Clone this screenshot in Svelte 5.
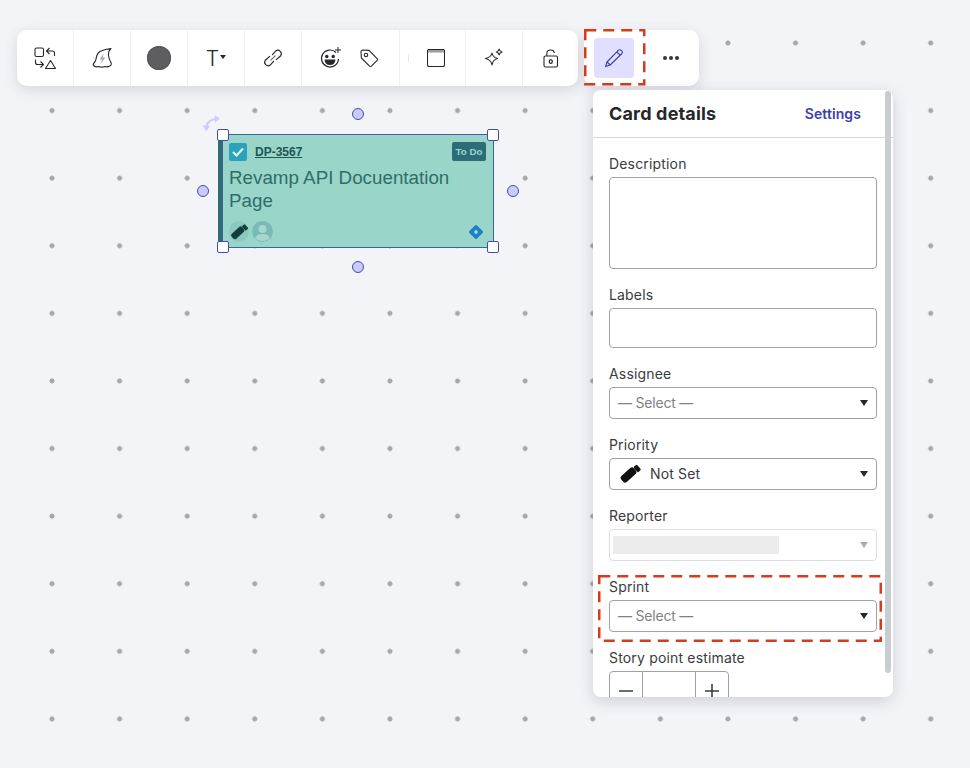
<script>
    const selects = { assignee: 'Assignee', sprint: 'Sprint' };
</script>

<div class="canvas">
    <div class="toolbar">
        <div class="group">
            <div class="cell">
                <svg width="24" height="24" viewBox="0 0 24 24" fill="none" stroke="#26272b" stroke-width="1.1">
                    <rect x="2" y="2" width="8.5" height="8.5" rx="1.5" />
                    <path d="M17.5 14.5 L22.5 22.5 H12.5 Z" stroke-linejoin="round" />
                    <path d="M16.5 2 L13.5 5 L16.5 8 M13.5 5 H19.5 Q21.5 5 21.5 7 V10" />
                    <path d="M7.5 15.5 L10.5 18.5 L7.5 21.5 M10.5 18.5 H4.5 Q2.5 18.5 2.5 16.5 V13.5" />
                </svg>
            </div>
            <div class="cell">
                <svg width="22" height="22" viewBox="0 0 22 22" fill="none" stroke="#26272b" stroke-width="1.1" stroke-linejoin="round">
                    <path d="M3 16 Q5 14 5.5 10 Q6.2 6 9 4.5 Q14 2 20 1.5 Q17 4.5 17.5 8.5 Q18 12.5 20 15.5 Q21 18.5 18.5 19 Q16.5 20.5 14 19.5 Q11 20.8 8 19.5 Q5 20.5 3 19 Q1.5 17.5 3 16 Z" />
                    <path d="M12.5 6.5 L8.5 12.5 H11 L9.5 17 L14.5 10.5 H11.8 Z" fill="#a9adb2" stroke="none" />
                </svg>
            </div>
            <div class="cell">
                <span class="swatch"></span>
            </div>
            <div class="cell text-cell">
                <span class="big-t">T</span>
                <span class="caret"></span>
            </div>
            <div class="cell">
                <svg width="22" height="22" viewBox="0 0 20 20" fill="none" stroke="#26272b" stroke-width="1.05" stroke-linecap="round">
                    <path d="M9.5 7 L12.5 3.6 A3.2 3.2 0 0 1 17 8 L13 11.5" />
                    <path d="M10.5 13 L7.5 16.4 A3.2 3.2 0 0 1 3 12 L7 8.5" />
                    <path d="M8 12 L12 8" stroke="#6d6e72" />
                </svg>
            </div>
            <div class="cell reactions">
                <svg width="24" height="24" viewBox="0 0 24 24" fill="none" stroke="#26272b">
                    <path d="M17 6.5 A8.5 8.5 0 1 0 19.5 13" stroke-width="1.2" />
                    <circle cx="7.8" cy="10.5" r="1.7" fill="#26272b" stroke="none" />
                    <circle cx="14.2" cy="10.5" r="1.7" fill="#26272b" stroke="none" />
                    <path d="M5.5 13.5 H16.5 Q16 19 11 19 Q6 19 5.5 13.5 Z" fill="#26272b" stroke="none" />
                    <path d="M19 1 V7 M16 4 H22" stroke-width="1" />
                </svg>
                <svg width="20" height="20" viewBox="0 0 20 20" fill="none" stroke="#26272b" stroke-width="1.1" stroke-linejoin="round">
                    <path d="M2 4 Q2 2 4 2 L10 2.4 L18.4 10.8 Q19 11.5 18.4 12.2 L12.2 18.4 Q11.5 19 10.8 18.4 L2.4 10 Z" />
                    <circle cx="7" cy="7" r="1.7" />
                </svg>
            </div>
            <div class="cell tick-cell">
                <svg width="18" height="18" viewBox="0 0 18 18" fill="none" stroke="#26272b" stroke-width="1.1">
                    <rect x="0.5" y="0.5" width="17" height="17" rx="1.5" />
                    <path d="M1 1.5 Q1 1 2 1 H16 Q17 1 17 1.5 V3.5 H1 Z" fill="#9b9da1" stroke="none" />
                </svg>
            </div>
            <div class="cell">
                <svg width="20" height="20" viewBox="0 0 20 20" fill="none" stroke="#26272b" stroke-width="1.1" stroke-linejoin="round">
                    <path d="M8 5 Q8.8 9.2 13.5 10.5 Q8.8 11.8 8 17 Q7.2 11.8 1.5 10.5 Q7.2 9.2 8 5 Z" />
                    <path d="M15.2 1 Q15.6 3.2 18 4 Q15.6 4.8 15.2 7 Q14.8 4.8 12.5 4 Q14.8 3.2 15.2 1 Z" />
                </svg>
            </div>
            <div class="cell last">
                <svg width="16" height="19" viewBox="0 0 16 19" fill="none" stroke="#26272b" stroke-width="1.1">
                    <rect x="1" y="7" width="13.5" height="11" rx="1.5" />
                    <path d="M3.8 7 V4.5 Q3.8 1 7.6 1 Q10.8 1 11.4 3.8" />
                    <ellipse cx="7.8" cy="12.5" rx="1.5" ry="1.9" stroke-width="1.3" />
                </svg>
            </div>
        </div>
        <div class="group tail">
            <div class="active">
                <svg width="20" height="20" viewBox="0 0 20 20" fill="none" stroke="#3c3fa8" stroke-width="1.1" stroke-linejoin="round">
                    <path d="M3 14 L14.5 2.2 Q15.6 1.2 16.9 2.2 L18 3.2 Q18.9 4.4 17.9 5.5 L6.2 17 L1.6 18.6 Z" />
                    <path d="M12.8 4 L16.2 7.2 M3 14 L6.2 17" />
                </svg>
            </div>
            <div class="more">
                <i></i><i></i><i></i>
            </div>
            <svg class="callout-bar" width="62" height="57" viewBox="0 0 62 57" fill="none">
                <rect x="1.25" y="1.25" width="59" height="54" stroke="#d93a1c" stroke-width="2.5" stroke-dasharray="11 7" />
            </svg>
        </div>
    </div>

    <!-- selected card on the board -->
    <div class="card">
        <div class="strip"></div>
        <div class="card-head">
            <span class="check">
                <svg width="12" height="10" viewBox="0 0 12 10" fill="none" stroke="#d8f2ee" stroke-width="2.2">
                    <path d="M1 5 L4.5 8.5 L11 1.5" />
                </svg>
            </span>
            <span class="key">DP-3567</span>
            <span class="status">To Do</span>
        </div>
        <div class="card-title">Revamp API Docuentation Page</div>
        <div class="card-foot">
            <span class="prio">
                <svg width="22" height="22" viewBox="0 0 24 24">
                    <rect x="2" y="9" width="17" height="8" rx="2.5" transform="rotate(-42 10.5 13)" fill="#0f3f3c" />
                    <rect x="17" y="3" width="4.5" height="7" rx="1.2" transform="rotate(-42 19.2 6.5)" fill="#0f3f3c" />
                </svg>
            </span>
            <span class="avatar">
                <svg width="21" height="21" viewBox="0 0 21 21">
                    <circle cx="10.5" cy="10.5" r="10.5" fill="#79bab6" />
                    <circle cx="10.5" cy="8" r="4" fill="#a5d6cf" />
                    <path d="M3 17 Q4.5 13 10.5 13 Q16.5 13 18 17 Q15 20 10.5 20 Q6 20 3 17 Z" fill="#a5d6cf" />
                </svg>
            </span>
            <svg class="jira" width="16" height="16" viewBox="0 0 16 16">
                <rect x="2.6" y="2.6" width="10.8" height="10.8" rx="1.5" transform="rotate(45 8 8)" fill="#1f7fc4" />
                <path d="M8 5.8 L10.2 8 L8 10.2 L5.8 8 Z" fill="#a8d8e8" />
            </svg>
        </div>

        <span class="sq tl"></span>
        <span class="sq tr"></span>
        <span class="sq bl"></span>
        <span class="sq br"></span>
        <span class="dot top"></span>
        <span class="dot bottom"></span>
        <span class="dot left"></span>
        <span class="dot right"></span>
        <svg class="rotate" width="20" height="20" viewBox="0 0 20 20" fill="none">
            <path d="M4.5 13 Q5 6.5 13 5" stroke="#cfcdf7" stroke-width="2.2" />
            <path d="M12.5 1 L18 4.6 L13 8.8 Z M0.8 11.5 L8 12 L4 17.5 Z" fill="#cfcdf7" />
        </svg>
    </div>

    <aside class="panel">
        <header>
            <h2>Card details</h2>
            <span class="settings">Settings</span>
        </header>
        <div class="body">
            <div class="field">
                <label for="desc">Description</label>
                <div id="desc" class="box area"></div>
            </div>
            <div class="field">
                <label for="labels">Labels</label>
                <div id="labels" class="box input"></div>
            </div>
            <div class="field">
                <label for="assignee">{selects.assignee}</label>
                <div id="assignee" class="box select">
                    <span class="placeholder">— Select —</span>
                    <span class="arrow"></span>
                </div>
            </div>
            <div class="field">
                <label for="priority">Priority</label>
                <div id="priority" class="box select">
                    <svg width="24" height="24" viewBox="0 0 24 24">
                        <rect x="2" y="9" width="17" height="8" rx="2.5" transform="rotate(-42 10.5 13)" fill="#111" />
                        <rect x="17" y="3" width="4.5" height="7" rx="1.2" transform="rotate(-42 19.2 6.5)" fill="#111" />
                    </svg>
                    <span class="value">Not Set</span>
                    <span class="arrow"></span>
                </div>
            </div>
            <div class="field">
                <label for="reporter">Reporter</label>
                <div id="reporter" class="box select disabled">
                    <span class="blank"></span>
                    <span class="arrow"></span>
                </div>
            </div>
            <div class="field sprint">
                <label for="sprint">{selects.sprint}</label>
                <div id="sprint" class="box select">
                    <span class="placeholder">— Select —</span>
                    <span class="arrow"></span>
                </div>
                <svg class="callout-sprint" width="284" height="67" viewBox="0 0 284 67" fill="none">
                    <rect x="1.25" y="1.25" width="281.5" height="64.5" stroke="#d93a1c" stroke-width="2.5" stroke-dasharray="11 7" />
                </svg>
            </div>
            <div class="field">
                <label for="points">Story point estimate</label>
                <div id="points" class="stepper">
                    <span class="step">
                        <svg width="16" height="16" viewBox="0 0 16 16" stroke="#3a3b40" stroke-width="1.6"><path d="M1 8 H15" /></svg>
                    </span>
                    <span class="num"></span>
                    <span class="step">
                        <svg width="16" height="16" viewBox="0 0 16 16" stroke="#3a3b40" stroke-width="1.6"><path d="M1 8 H15 M8 1 V15" /></svg>
                    </span>
                </div>
            </div>
        </div>
        <div class="scroll"></div>
    </aside>
</div>

<style>
    :global(body) {
        margin: 0;
        background: #f3f4f8;
    }

    .canvas {
        position: relative;
        width: 970px;
        height: 768px;
        overflow: hidden;
        background-color: #f3f4f8;
        background-image: radial-gradient(circle, #a6a8ac 2.2px, transparent 2.9px);
        background-size: 67.6px 67.6px;
        background-position: 18.2px 9.2px;
        font-family: Inter, "Liberation Sans", sans-serif;
    }

    /* toolbar */
    .toolbar {
        position: absolute;
        left: 17px;
        top: 30px;
        display: flex;
        gap: 6px;
    }

    .group {
        display: flex;
        height: 56px;
        background: #fff;
        border-radius: 10px;
        box-shadow: 0 4px 14px rgba(40, 44, 60, 0.14);
    }

    .cell {
        display: flex;
        align-items: center;
        justify-content: center;
        width: 56px;
        border-left: 1px solid #eeeff1;
    }

    .cell:first-child {
        border-left: none;
    }

    .cell.last {
        width: 55px;
    }

    .reactions {
        box-sizing: border-box;
        width: 98px;
        justify-content: flex-start;
        gap: 16px;
        padding-left: 17px;
    }

    .tick-cell {
        width: 66px;
        position: relative;
        padding-left: 6px;
        box-sizing: border-box;
    }

    .tick-cell::before {
        content: '';
        position: absolute;
        left: 8px;
        top: 25px;
        width: 1px;
        height: 7px;
        background: #e4e5e8;
    }

    .swatch {
        width: 24px;
        height: 24px;
        border-radius: 50%;
        background: #5e5e60;
        box-shadow: inset 0 0 0 1px #555;
    }

    .text-cell {
        gap: 1px;
    }

    .big-t {
        font-size: 21px;
        font-weight: 300;
        color: #26272b;
    }

    .caret {
        width: 0;
        height: 0;
        margin-top: -3px;
        border-left: 3px solid transparent;
        border-right: 3px solid transparent;
        border-top: 4px solid #26272b;
    }

    .tail {
        position: relative;
        width: 115px;
        padding-left: 10px;
        align-items: center;
        box-sizing: border-box;
    }

    .active {
        display: flex;
        align-items: center;
        justify-content: center;
        width: 40px;
        height: 40px;
        border-radius: 4px;
        background: #e0dfff;
    }

    .more {
        display: flex;
        gap: 2px;
        margin-left: 29px;
    }

    .more i {
        width: 4px;
        height: 4px;
        border-radius: 50%;
        background: #34353a;
    }

    .callout-bar {
        position: absolute;
        left: 0;
        top: -1px;
    }

    /* card */
    .card {
        position: absolute;
        left: 222px;
        top: 134px;
        width: 272px;
        height: 114px;
        box-sizing: border-box;
        padding: 7px 7px 0 6px;
        background: #9ad5c9;
        border: 1px solid #3d62a4;
        font-family: "Liberation Sans", Arial, sans-serif;
    }

    .strip {
        position: absolute;
        left: -5px;
        top: -1px;
        bottom: -1px;
        width: 4px;
        background: #2f6e6e;
    }

    .card-head {
        display: flex;
        align-items: center;
        height: 19px;
    }

    .check {
        display: flex;
        align-items: center;
        justify-content: center;
        width: 18px;
        height: 18px;
        border-radius: 2px;
        background: #2ca3bb;
    }

    .key {
        margin-left: 8px;
        font-size: 12px;
        font-weight: 700;
        color: #1c5652;
        text-decoration: underline;
    }

    .status {
        margin-left: auto;
        padding: 0 3.5px;
        height: 19px;
        line-height: 20px;
        border-radius: 2px;
        font-size: 9.8px;
        font-weight: 700;
        color: #9ad5d0;
        background: #2c6d78;
    }

    .card-title {
        margin-top: 5px;
        width: 240px;
        font-size: 18.8px;
        line-height: 23px;
        color: #2f6e68;
    }

    .card-foot {
        position: absolute;
        left: 6px;
        right: 9px;
        bottom: 5px;
        display: flex;
        align-items: center;
        gap: 3px;
    }

    .prio {
        display: flex;
        align-items: center;
        justify-content: center;
        width: 20px;
        height: 21px;
        border-radius: 50%;
        background: #8cc8bd;
    }

    .avatar {
        display: flex;
    }

    .jira {
        margin-left: auto;
    }

    .sq {
        position: absolute;
        width: 10px;
        height: 10px;
        border: 1px solid #474ca8;
        border-radius: 2px;
        background: #fff;
    }

    .tl { left: -6px; top: -6px; }
    .tr { right: -6px; top: -6px; }
    .bl { left: -6px; bottom: -6px; }
    .br { right: -6px; bottom: -6px; }

    .dot {
        position: absolute;
        width: 10px;
        height: 10px;
        border: 1px solid #474ca8;
        border-radius: 50%;
        background: #cbcaff;
    }

    .top { left: 128.5px; top: -27px; }
    .bottom { left: 128.5px; bottom: -26px; }
    .left { left: -26.5px; top: 49.5px; }
    .right { right: -26px; top: 49.5px; }

    .rotate {
        position: absolute;
        left: -21px;
        top: -21px;
    }

    /* side panel */
    .panel {
        position: absolute;
        left: 593px;
        top: 90px;
        width: 300px;
        height: 607px;
        overflow: hidden;
        background: #fff;
        border-radius: 8px;
        box-shadow: 0 4px 16px rgba(40, 44, 60, 0.18);
    }

    header {
        display: flex;
        align-items: center;
        justify-content: space-between;
        height: 47px;
        padding: 0 32px 0 16px;
        border-bottom: 1px solid #d5d7da;
    }

    h2 {
        margin: 0;
        font-size: 18px;
        font-weight: 700;
        letter-spacing: 0.17px;
        color: #26272b;
    }

    .settings {
        font-size: 14px;
        font-weight: 600;
        letter-spacing: 0.1px;
        color: #3b40ad;
    }

    .body {
        display: flex;
        flex-direction: column;
        gap: 16px;
        padding: 16px 16px 0;
    }

    .field {
        display: flex;
        flex-direction: column;
        gap: 3px;
        width: 268px;
    }

    label {
        height: 20px;
        line-height: 20px;
        font-size: 14px;
        letter-spacing: 0.17px;
        color: #3a3b40;
    }

    .box {
        box-sizing: border-box;
        border: 1px solid #a0a1a5;
        border-radius: 4px;
    }

    .area { height: 92px; }
    .input { height: 40px; }

    .select {
        display: flex;
        align-items: center;
        height: 32px;
        padding: 0 8px;
        font-size: 14px;
    }

    .placeholder {
        margin-top: -2px;
        color: #7f8185;
        letter-spacing: -0.2px;
    }

    .value {
        margin: -2px 0 0 8px;
        letter-spacing: 0.15px;
        color: #3a3b40;
    }

    .arrow {
        margin-left: auto;
        width: 0;
        height: 0;
        border-left: 4px solid transparent;
        border-right: 4px solid transparent;
        border-top: 6px solid #26272b;
    }

    .disabled {
        border-color: #dcdde0;
        padding: 0 8px 0 3px;
    }

    .disabled .arrow {
        border-top-color: #a9abae;
    }

    .blank {
        width: 166px;
        height: 18px;
        background: #ebebec;
    }

    .sprint {
        position: relative;
    }

    .callout-sprint {
        position: absolute;
        left: -11px;
        top: -2px;
    }

    .stepper {
        display: flex;
        width: 120px;
        height: 40px;
        box-sizing: border-box;
        border: 1px solid #a0a1a5;
        border-radius: 4px;
    }

    .step {
        display: flex;
        align-items: center;
        justify-content: center;
        width: 32px;
    }

    .num {
        flex: 1;
        border-left: 1px solid #a0a1a5;
        border-right: 1px solid #a0a1a5;
    }

    .scroll {
        position: absolute;
        right: 2px;
        top: 1px;
        width: 6px;
        height: 582px;
        border-radius: 3px;
        background: #c9cdd0;
    }
</style>
